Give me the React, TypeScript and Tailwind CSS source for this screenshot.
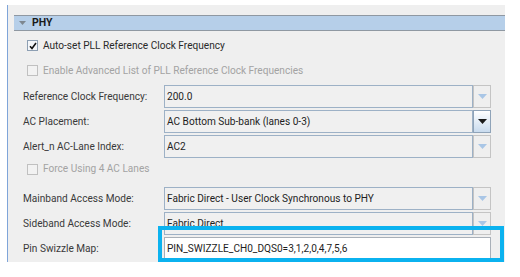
import React from "react";

const font = { fontFamily: "Roboto, 'Noto Sans', sans-serif" };

function Arrow({ active }: { active?: boolean }) {
  return (
    <div
      className={
        active
          ? "w-[18px] shrink-0 h-full flex items-center justify-center border border-[#8fa3b8] bg-gradient-to-b from-[#ffffff] to-[#c9dbee]"
          : "w-[18px] shrink-0 h-full flex items-center justify-center border border-[#c4c4c4] bg-[#efefef]"
      }
    >
      <svg width="9" height="5" viewBox="0 0 9 5">
        <polygon points="0,0 9,0 4.5,5" fill={active ? "#1a1a1a" : "#a9c6e6"} />
      </svg>
    </div>
  );
}

function Combo({ label, value, active }: { label: string; value: string; active?: boolean }) {
  return (
    <div className="flex items-center h-[25px]">
      <div className="w-[156px] shrink-0 pl-[15px] text-[10.1px] text-[#3a3a3a] whitespace-nowrap">{label}</div>
      <div className="flex h-[23px] w-[327px] shrink-0">
        <div className="flex-1 flex items-center border border-[#9db1c6] bg-[#f0f0f0] pl-[2px] text-[10.1px] text-[#1e1e1e] whitespace-nowrap">
          {value}
        </div>
        <Arrow active={active} />
      </div>
    </div>
  );
}

function Check({ label, checked, disabled }: { label: string; checked?: boolean; disabled?: boolean }) {
  return (
    <div className="flex items-center h-[25px] pl-[19px]">
      <div
        className={
          "w-[11px] h-[11px] border flex items-center justify-center " +
          (disabled ? "border-[#c0c0c0] bg-[#f2f2f2]" : "border-[#8d9fb3] bg-[#f4f6f9]")
        }
      >
        {checked && (
          <svg width="8" height="8" viewBox="0 0 8 8">
            <path d="M1 4.2 L3 6.5 L7 1" stroke="#111" strokeWidth="1.6" fill="none" />
          </svg>
        )}
      </div>
      <span className={"ml-[5px] text-[10.1px] whitespace-nowrap " + (disabled ? "text-[#a3a3a3]" : "text-[#2a2a2a]")}>{label}</span>
    </div>
  );
}

export default function App() {
  return (
    <div className="w-[520px] h-[277px] bg-white relative overflow-hidden" style={font}>
      <div className="ml-[7px] mt-[5px] w-[498px] h-[257px] border-l border-[#7fa5d9] bg-[#efefef] flex flex-col">
        <div className="mt-[10px] ml-[6px] h-[16px] border-y border-[#8f98a2] bg-[#b6cfe9] flex items-center">
          <svg width="7" height="5" viewBox="0 0 7 5" className="ml-[5px]">
            <polygon points="0,0 7,0 3.5,4" fill="#7d8790" />
          </svg>
          <span className="ml-[6px] text-[10.5px] font-bold text-[#1a1a1a]">PHY</span>
        </div>
        <div className="mt-[2px]">
          <Check label="Auto-set PLL Reference Clock Frequency" checked />
          <Check label="Enable Advanced List of PLL Reference Clock Frequencies" disabled />
        </div>
        <div className="mt-[1px]">
          <Combo label="Reference Clock Frequency:" value="200.0" />
          <Combo label="AC Placement:" value="AC Bottom Sub-bank (lanes 0-3)" active />
          <Combo label="Alert_n AC-Lane Index:" value="AC2" />
        </div>
        <div className="h-[27px] pb-[7px] flex items-center">
          <Check label="Force Using 4 AC Lanes" disabled />
        </div>
        <Combo label="Mainband Access Mode:" value="Fabric Direct - User Clock Synchronous to PHY" />
        <Combo label="Sideband Access Mode:" value="Fabric Direct" />
        <div className="flex items-center h-[25px]">
          <div className="w-[156px] shrink-0 pl-[15px] text-[10.1px] text-[#3a3a3a] whitespace-nowrap">Pin Swizzle Map:</div>
          <div className="h-[23px] w-[327px] shrink-0 border border-[#a9b0b8] bg-white flex items-center pl-[2px] text-[10.1px] text-[#1e1e1e] whitespace-nowrap">
            PIN_SWIZZLE_CH0_DQS0=3,1,2,0,4,7,5,6
          </div>
        </div>
      </div>
      <div className="absolute left-[158px] top-[226px] w-[346px] h-[36px] border-[4px] border-[#0bb2ef]" />
    </div>
  );
}
